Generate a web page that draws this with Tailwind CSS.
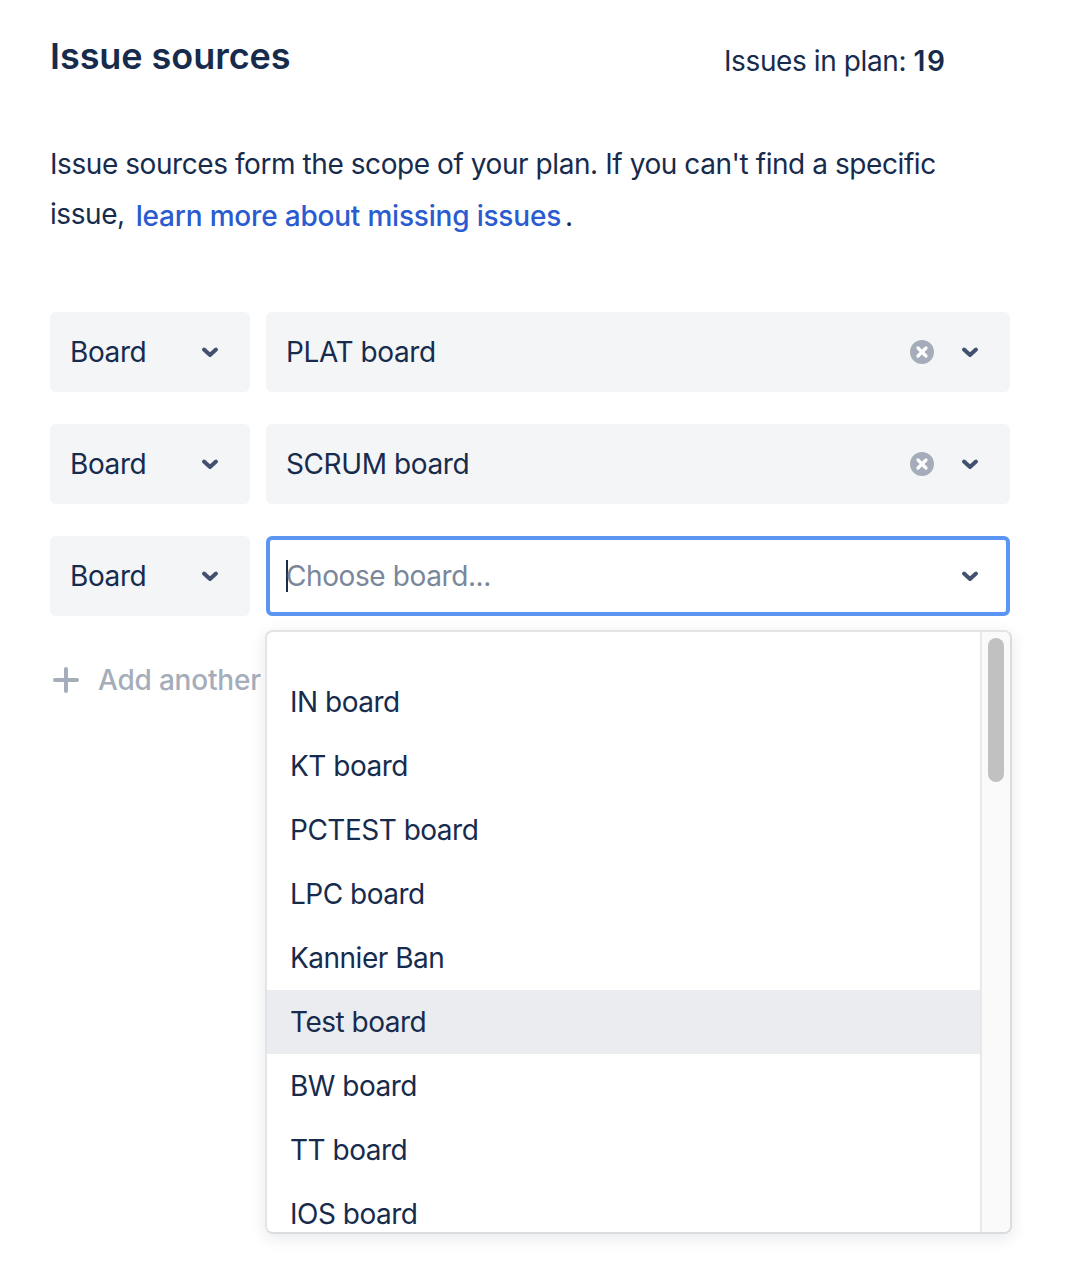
<!DOCTYPE html>
<html lang="en">
<head>
    <meta charset="UTF-8">
    <title>Issue sources</title>
    <script src="https://cdn.jsdelivr.net/npm/@tailwindcss/browser@4"></script>
</head>
<body class="bg-white font-['Inter',sans-serif] text-[#172b4d]">

<div class="relative h-[1264px] w-[1068px] overflow-hidden pl-[50px] pr-[58px] tracking-[-0.4px]">
    <!-- Header -->
    <div class="flex h-[112px] items-start">
        <h1 class="mt-[32px] w-[674px] text-[36px] font-semibold leading-[48px] tracking-[-0.05px] text-[#172b4d]">Issue sources</h1>
        <p class="mt-[41px] text-[28px] leading-[40px]">Issues in plan: <b class="font-semibold tracking-[1.5px]">19</b></p>
    </div>

    <p class="mt-[27px] h-[173px] text-[28px] leading-[50px] tracking-[-0.43px]">
        Issue sources form the scope of your plan. If you can't find a specific<br>
        issue,<a class="ml-[11px] align-[-2px] font-medium tracking-[-0.2px] text-[#2a5bd0]">learn more about missing issues</a><span class="ml-[4px] align-[-2px]">.</span>
    </p>

    <!-- Rows -->
    <div class="flex flex-col gap-[32px]">
        <div class="flex gap-[16px]">
            <div class="flex h-[80px] w-[200px] items-center justify-between rounded-[6px] bg-[#f4f5f7] pl-[20px] pr-[28px] text-[28px]">
                <span>Board</span>
                <svg class="h-[24px] w-[24px] text-[#42526e]" viewBox="0 0 24 24" fill="none" stroke="currentColor" stroke-width="4" stroke-linecap="round" stroke-linejoin="round"><path d="M6 9.5l6 5.5 6-5.5"/></svg>
            </div>
            <div class="flex h-[80px] flex-1 items-center rounded-[6px] bg-[#f4f5f7] pl-[20px] pr-[28px] text-[28px]">
                <span class="flex-1">PLAT board</span>
                <svg class="mr-[24px] h-[24px] w-[24px]" viewBox="0 0 24 24"><circle cx="12" cy="12" r="12" fill="#a5adba"/><path d="M8 8l8 8M16 8l-8 8" stroke="#fff" stroke-width="3.2" stroke-linecap="round"/></svg>
                <svg class="h-[24px] w-[24px] text-[#42526e]" viewBox="0 0 24 24" fill="none" stroke="currentColor" stroke-width="4" stroke-linecap="round" stroke-linejoin="round"><path d="M6 9.5l6 5.5 6-5.5"/></svg>
            </div>
        </div>

        <div class="flex gap-[16px]">
            <div class="flex h-[80px] w-[200px] items-center justify-between rounded-[6px] bg-[#f4f5f7] pl-[20px] pr-[28px] text-[28px]">
                <span>Board</span>
                <svg class="h-[24px] w-[24px] text-[#42526e]" viewBox="0 0 24 24" fill="none" stroke="currentColor" stroke-width="4" stroke-linecap="round" stroke-linejoin="round"><path d="M6 9.5l6 5.5 6-5.5"/></svg>
            </div>
            <div class="flex h-[80px] flex-1 items-center rounded-[6px] bg-[#f4f5f7] pl-[20px] pr-[28px] text-[28px]">
                <span class="flex-1">SCRUM board</span>
                <svg class="mr-[24px] h-[24px] w-[24px]" viewBox="0 0 24 24"><circle cx="12" cy="12" r="12" fill="#a5adba"/><path d="M8 8l8 8M16 8l-8 8" stroke="#fff" stroke-width="3.2" stroke-linecap="round"/></svg>
                <svg class="h-[24px] w-[24px] text-[#42526e]" viewBox="0 0 24 24" fill="none" stroke="currentColor" stroke-width="4" stroke-linecap="round" stroke-linejoin="round"><path d="M6 9.5l6 5.5 6-5.5"/></svg>
            </div>
        </div>

        <div class="flex gap-[16px]">
            <div class="flex h-[80px] w-[200px] items-center justify-between rounded-[6px] bg-[#f4f5f7] pl-[20px] pr-[28px] text-[28px]">
                <span>Board</span>
                <svg class="h-[24px] w-[24px] text-[#42526e]" viewBox="0 0 24 24" fill="none" stroke="currentColor" stroke-width="4" stroke-linecap="round" stroke-linejoin="round"><path d="M6 9.5l6 5.5 6-5.5"/></svg>
            </div>
            <div class="flex h-[80px] flex-1 items-center rounded-[6px] border-[4px] border-[#5a95f2] bg-white pl-[16px] pr-[24px] text-[28px]">
                <span class="h-[32px] w-[2px] bg-[#172b4d]"></span>
                <span class="ml-[-2px] flex-1 text-[#7a869a]">Choose board...</span>
                <svg class="h-[24px] w-[24px] text-[#42526e]" viewBox="0 0 24 24" fill="none" stroke="currentColor" stroke-width="4" stroke-linecap="round" stroke-linejoin="round"><path d="M6 9.5l6 5.5 6-5.5"/></svg>
            </div>
        </div>
    </div>

    <!-- Add another -->
    <div class="mt-[48px] flex h-[32px] items-center text-[28px] font-medium tracking-[-0.2px] text-[#a5adba]">
        <svg class="ml-[2px] mr-[18px] h-[28px] w-[28px]" viewBox="0 0 28 28" fill="none" stroke="currentColor" stroke-width="4" stroke-linecap="round"><path d="M14 3v22M3 14h22"/></svg>
        Add another
    </div>

    <!-- Dropdown menu -->
    <div class="absolute left-[265px] top-[630px] flex h-[604px] w-[747px] overflow-hidden rounded-[8px] border-2 border-[#e3e4e6] border-b-[#dcdcdc] border-r-[#dcdcdc] bg-white shadow-[0_4px_16px_rgba(9,30,66,0.1)]">
        <ul class="flex-1 pt-[38px] text-[28px] tracking-[-0.5px]">
            <li class="flex h-[64px] items-center pl-[23px]">IN board</li>
            <li class="flex h-[64px] items-center pl-[23px]">KT board</li>
            <li class="flex h-[64px] items-center pl-[23px]">PCTEST board</li>
            <li class="flex h-[64px] items-center pl-[23px]">LPC board</li>
            <li class="flex h-[64px] items-center pl-[23px]">Kannier Ban</li>
            <li class="flex h-[64px] items-center bg-[#ebecf0] pl-[23px]">Test board</li>
            <li class="flex h-[64px] items-center pl-[23px]">BW board</li>
            <li class="flex h-[64px] items-center pl-[23px]">TT board</li>
            <li class="flex h-[64px] items-center pl-[23px]">IOS board</li>
        </ul>
        <div class="w-[30px] border-l-2 border-[#e8e8e8] bg-[#fafafa] pl-[6px] pt-[6px]">
            <div class="h-[144px] w-[16px] rounded-full bg-[#c1c1c1]"></div>
        </div>
    </div>
</div>

</body>
</html>
